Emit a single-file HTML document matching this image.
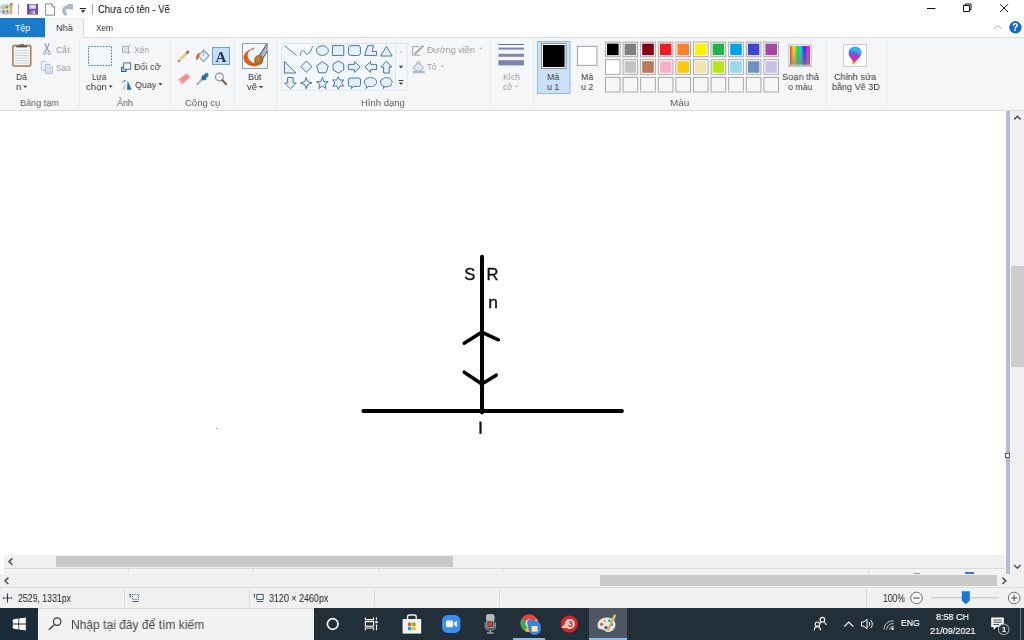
<!DOCTYPE html>
<html><head><meta charset="utf-8">
<style>
*{margin:0;padding:0;box-sizing:border-box}
html,body{width:1024px;height:640px;overflow:hidden;background:#fff}
body{font-family:"Liberation Sans",sans-serif;font-size:9.5px;color:#383838;position:relative}
.a{position:absolute}
.t{position:absolute;white-space:nowrap;will-change:transform;line-height:12px;height:12px;transform-origin:0 0;transform:scaleX(.93)}
.g{color:#9a9a9a}
.lbl{color:#5e5e5e}
.sep{position:absolute;width:1px;background:#e9eaec;top:40px;height:67px}
svg{position:absolute;overflow:visible}
</style></head><body>

<!-- ===== title bar ===== -->
<div class="a" id="titlebar" style="left:0;top:0;width:1024px;height:18px;background:#fff"></div>
<div class="t" style="left:98.3px;top:3px;font-size:10.5px;color:#000;transform:scaleX(0.896)">Chưa có tên - Vẽ</div>



<!-- ===== tab row ===== -->
<div class="a" style="left:0;top:18px;width:1024px;height:19px;background:#fff"></div>
<div class="a" style="left:0;top:18px;width:45px;height:19px;background:#1979ca"></div>
<div class="a" style="left:45px;top:18px;width:39px;height:20px;background:#f5f6f7;border:1px solid #dadbdc;border-top-color:#ebecee;border-left-color:#ebecee;border-bottom:none"></div>
<div class="t" style="left:14.6px;top:21.6px;color:#fff;transform:scaleX(0.934)">Tệp</div>
<div class="t" style="left:56.1px;top:21.6px;color:#333;transform:scaleX(0.958)">Nhà</div>
<div class="t" style="left:95.8px;top:21.6px;color:#333;transform:scaleX(0.87)">Xem</div>

<!-- title bar icons -->
<svg class="a" style="left:0;top:0" width="1024" height="40" viewBox="0 0 1024 40">
  <!-- paint app icon -->
  <ellipse cx="5.5" cy="9.5" rx="6" ry="4.6" fill="#dfe9d8" stroke="#8fb0c4" stroke-width="1"/>
  <circle cx="3.3" cy="8" r="1.4" fill="#d9b23a"/><circle cx="6.8" cy="7.2" r="1.4" fill="#5aa55a"/>
  <circle cx="3.6" cy="11.6" r="1.4" fill="#5a86c8"/><circle cx="7.3" cy="11.4" r="1.3" fill="#c06a8a"/>
  <rect x="10" y="3" width="2.2" height="11.5" rx="1" fill="#e8a35c"/>
  <rect x="9.6" y="3" width="3" height="2.6" fill="#c9863f"/>
  <rect x="18" y="4" width="1" height="10.5" fill="#a6a6a6"/>
  <!-- save -->
  <rect x="27" y="4" width="11" height="10.6" fill="#6b519f"/>
  <rect x="29.4" y="4.6" width="6.4" height="4.2" fill="#ded6ee"/>
  <rect x="30.6" y="10.6" width="4.6" height="3.4" fill="#cfc4e6"/>
  <rect x="31.2" y="11.2" width="1.4" height="2.4" fill="#6b519f"/>
  <!-- new doc -->
  <path d="M45.4 3.8 H51.6 L54.6 6.8 V15.2 H45.4 Z" fill="#fbfbfb" stroke="#8e8e8e" stroke-width="1"/>
  <path d="M51.6 3.8 V6.8 H54.6" fill="none" stroke="#8e8e8e" stroke-width=".8"/>
  <!-- redo -->
  <path d="M65.4 14 C62.6 11.4 63.2 7 68.6 6.8" fill="none" stroke="#a9b6cd" stroke-width="3.2" stroke-linecap="round"/><path d="M67.6 4 H73 V9.6 H70.4 L67.6 8.6 Z" fill="#a9b6cd"/>
  <!-- qat dropdown -->
  <rect x="79.8" y="8" width="6.2" height="1.1" fill="#222"/>
  <path d="M80.8 10.2 H85.2 L83 12.9 Z" fill="#222"/>
  <rect x="92" y="4" width="1" height="10.5" fill="#a6a6a6"/>
  <!-- window controls -->
  <rect x="927" y="8" width="8.4" height="1" fill="#111"/>
  <path d="M963.5 5.5 H969.5 V11.5 H963.5 Z M965.2 5.5 V4 H971 V9.8 H969.5" fill="none" stroke="#111" stroke-width="1"/>
  <path d="M1000.2 4.2 L1008 12 M1008 4.2 L1000.2 12" fill="none" stroke="#111" stroke-width="1"/>
  <!-- collapse ribbon -->
  <path d="M994.2 28.8 L997.8 25.4 L1001.4 28.8" fill="none" stroke="#bdbdbd" stroke-width="1.1"/>
  <!-- help -->
  <circle cx="1015.4" cy="27.3" r="6.2" fill="#176bc0"/>
  <text x="1015.4" y="31" font-family="Liberation Sans" font-weight="bold" font-size="10" fill="#fff" text-anchor="middle">?</text>
</svg>

<!-- ===== ribbon ===== -->
<div class="a" id="ribbon" style="left:0;top:37px;width:1024px;height:74px;background:#f5f6f7;border-top:1px solid #dadbdc;border-bottom:1px solid #dadbdc"></div>
<div class="a" style="left:46px;top:37px;width:37px;height:1px;background:#f5f6f7"></div>


<!-- ribbon separators -->
<div class="sep" style="left:79px"></div>
<div class="sep" style="left:170px"></div>
<div class="sep" style="left:234px"></div>
<div class="sep" style="left:276px"></div>
<div class="sep" style="left:490px"></div>
<div class="sep" style="left:533px"></div>
<div class="sep" style="left:826px"></div>
<div class="sep" style="left:886px"></div>

<!-- ribbon icons 1: clipboard / image / tools / brush -->
<svg class="a" id="ic1" style="left:0;top:0" width="1024" height="112" viewBox="0 0 1024 112">
  <!-- paste clipboard -->
  <rect x="12.9" y="45.6" width="17.8" height="20.4" rx="1.2" fill="#fdfdfd" stroke="#a77d47" stroke-width="1.6"/>
  <rect x="14.6" y="47.6" width="14.4" height="16.8" fill="#f4f6fa"/>
  <g stroke="#cfd4de" stroke-width="1"><path d="M15 50.5H28.6M15 53H28.6M15 55.5H28.6M15 58H28.6M15 60.5H28.6M15 63H28.6"/></g>
  <rect x="16.4" y="45.8" width="10.8" height="1.6" fill="#5d5348"/>
  <rect x="19.6" y="44" width="4.4" height="1.8" rx=".8" fill="#7a6e60"/>
  <!-- scissors (disabled) -->
  <g fill="none" stroke="#9da2c2" stroke-width="1.3">
    <path d="M44.6 43.4 L49 52"/><path d="M49.4 43.4 L45 52"/>
  </g>
  <circle cx="44.6" cy="53" r="1.5" fill="none" stroke="#a9aab8" stroke-width="1"/>
  <circle cx="49.4" cy="53" r="1.5" fill="none" stroke="#a9aab8" stroke-width="1"/>
  <!-- copy (disabled) -->
  <path d="M41.4 61.4 H46 L48.2 63.6 V70.2 H41.4 Z" fill="#eef2f8" stroke="#b9c3d6" stroke-width=".9"/>
  <path d="M45.4 64.6 H50 L52.4 67 V73.4 H45.4 Z" fill="#e4ecf7" stroke="#a9b6cf" stroke-width=".9"/>
  <g stroke="#b9c6dc" stroke-width=".7"><path d="M46.6 68H51M46.6 69.8H51M46.6 71.6H51"/></g>

  <!-- select dotted rect -->
  <rect x="88.5" y="46.5" width="23" height="19" fill="none" stroke="#3b6a9e" stroke-width=".9" stroke-dasharray="1.6 1.3"/>
  <path d="M108.8 85.6 H112.6 L110.7 87.8 Z" fill="#333"/>
  <!-- crop (disabled) -->
  <g fill="none" stroke="#a6aab9" stroke-width="1">
    <rect x="122.6" y="46.4" width="5.8" height="5.8" fill="#eef1f6"/>
    <path d="M128.4 46.4 L130.6 44.8 M128.4 52.2 H130.4 M128.4 52.2 V54"/>
    <path d="M124.2 50.6 L126.8 48" stroke="#b4b9cc"/>
  </g>
  <!-- resize -->
  <rect x="121.6" y="67.4" width="4.4" height="4" fill="#f5f6f7" stroke="#1f5fa8" stroke-width="1.2"/>
  <rect x="123.6" y="62.9" width="7" height="6.4" fill="#eef3fa" stroke="#55708c" stroke-width="1"/>
  <!-- rotate -->
  <path d="M127.6 80.6 L131.6 89.8 H127 Z" fill="#2e6da4"/>
  <path d="M125.6 82.4 L121.4 89.8 H125.6 Z" fill="#cfd5de"/>
  <path d="M122.2 83.2 C122.6 81.6 123.6 81 124.6 80.8" fill="none" stroke="#5f88b5" stroke-width="1"/>
  <rect x="124" y="80" width="1.4" height="1.6" fill="#3c76b0"/>
  <path d="M158.4 83.3 H162.4 L160.4 85.5 Z" fill="#333"/>
  <!-- pencil -->
  <path d="M178.2 61.6 L187.4 52.4" stroke="#dccd7c" stroke-width="2.7" fill="none"/>
  <path d="M186.6 53.2 L188.8 51" stroke="#8f7d4a" stroke-width="2.7" fill="none"/>
  <path d="M177.4 62.6 L178.6 59.8 L180.2 61.4 Z" fill="#9a8a60"/>
  <!-- fill bucket -->
  <path d="M203.6 50 L209 55.6 L203.4 61.6 L198.4 56 Z" fill="#eaf3fb" stroke="#7f9cb8" stroke-width="1.1"/>
  <path d="M203.6 50 L203.4 56" stroke="#8fa8c2" stroke-width=".9" fill="none"/>
  <path d="M199.6 52.6 C196.6 54 195.4 57.6 196.6 60.6 C198.2 59 199.2 56.4 199.6 52.6 Z" fill="#e2512a"/>
  <!-- text tool (selected) -->
  <rect x="212.5" y="47.5" width="17" height="17" fill="#c7def6" stroke="#6c9fd6" stroke-width="1"/>
  <text x="221" y="62" font-family="Liberation Serif" font-weight="bold" font-size="15" fill="#1f3560" text-anchor="middle">A</text>
  <!-- eraser -->
  <path d="M178.2 79.6 L186.6 73.4 L190.2 77 L182 84.2 Z" fill="#f08f94"/>
  <path d="M178.2 79.6 L182 84.2 L183.6 82.8 L179.8 78.4 Z" fill="#f4aaae"/>
  <!-- color picker -->
  <path d="M197.4 84.2 L203.6 77.8" stroke="#aeb4bd" stroke-width="2.2" fill="none" stroke-linecap="round"/>
  <path d="M203.2 78.4 L206.6 74.8" stroke="#2f74b5" stroke-width="4" fill="none" stroke-linecap="round"/>
  <path d="M202 75.8 L206 79.8" stroke="#2a5f96" stroke-width="1.4" fill="none"/>
  <!-- magnifier -->
  <circle cx="219.4" cy="77" r="3.9" fill="#f3f7fb" stroke="#8b9097" stroke-width="1.2"/>
  <path d="M222.4 80.2 L226 84.2" stroke="#6b5a4a" stroke-width="2" fill="none" stroke-linecap="round"/>
  <!-- brushes -->
  <rect x="242.5" y="43.5" width="25" height="25" fill="#f3f6fa" stroke="#9b9fa3" stroke-width="1"/>
  <path d="M253.4 48.4 C246.4 50 243 54.6 243.6 58.6 C244.4 63.6 249.6 66.8 255 66.2 C257.4 66 259 65 259.6 64 L252.6 62.6 C249.4 60.8 247.2 58 247.6 54.8 C247.8 52.6 249.6 50.4 252.6 49.6 Z" fill="#e65a1c"/>
  <path d="M251.4 48 L254.4 47.6 L253.6 50.2 Z" fill="#e8743a"/>
  <path d="M259.6 55.4 L266.8 44.4" stroke="#59616b" stroke-width="1.4" fill="none"/>
  <path d="M261.4 56.6 L267.2 47.2" stroke="#aab3be" stroke-width="2.4" fill="none"/>
  <path d="M263 58 L267.4 51" stroke="#59616b" stroke-width="1.2" fill="none"/>
  <ellipse cx="258.8" cy="60" rx="4.6" ry="5.2" transform="rotate(25 258.8 60)" fill="#a56e35"/>
  <ellipse cx="257.8" cy="59" rx="2.4" ry="3" transform="rotate(25 257.8 59)" fill="#b57f45"/>
  <path d="M259 86 H263 L261 88.2 Z" fill="#333"/>
  <!-- paste dropdown arrow -->
  <path d="M23.3 85.7 H27.1 L25.2 87.9 Z" fill="#333"/>
</svg>


<!-- shapes gallery -->
<svg class="a" id="ic2" style="left:0;top:0" width="1024" height="112" viewBox="0 0 1024 112">
  <defs><linearGradient id="sg" x1="0" y1="0" x2="1" y2="1"><stop offset="0" stop-color="#dcebfa"/><stop offset="1" stop-color="#f1f7fd"/></linearGradient></defs>
  <rect x="281.5" y="43.5" width="125.5" height="46.5" fill="#f4f8fc" stroke="#e0e5ec" stroke-width="1"/>
  <rect x="395" y="44" width="1" height="45.5" fill="#e3e7ee"/>
  <g fill="url(#sg)" stroke="#4877a4" stroke-width="1" stroke-linejoin="round">
    <path d="M284.2 45.6 L296.6 55.4" fill="none" stroke="#5b7fa3"/>
    <path d="M300.2 55.6 C300.4 51.8 302.4 49.8 304 51 C306 52.6 305.6 55 307.6 54.2 C310 53.2 311.6 49.4 312.6 46.2" fill="none" stroke="#5b7fa3"/>
    <ellipse cx="322.4" cy="50.6" rx="6" ry="4.8"/>
    <rect x="332.4" y="45.6" width="11.4" height="9.8"/>
    <rect x="348.4" y="45.6" width="12" height="9.8" rx="2.2"/>
    <path d="M367.6 45.6 H373.6 L372.2 51.4 H376.6 V55.4 H364.6 Z"/>
    <path d="M386.4 46.4 L392.2 56 H380.6 Z"/>
    <path d="M284.4 61.4 V73 H295.8 Z"/>
    <path d="M306.4 61 L312 66.6 L306.4 72.2 L300.8 66.6 Z"/>
    <polygon points="322.4,61.6 328.3,65.9 326.0,72.8 318.8,72.8 316.5,65.9"/>
    <polygon points="338.4,60.9 343.7,64.0 343.7,70.0 338.4,73.1 333.1,70.0 333.1,64.0"/>
    <path d="M348.4 64.4 H354.4 V61.6 L360.2 67 L354.4 72.4 V69.6 H348.4 Z"/>
    <path d="M376.6 64.4 H370.6 V61.6 L364.8 67 L370.6 72.4 V69.6 H376.6 Z"/>
    <path d="M383.6 73 V67 H380.8 L386.4 61.2 L392 67 H389.2 V73 Z"/>
    <path d="M287.6 77.6 V83 H284.6 L290.4 88.8 L296.2 83 H293.2 V77.6 Z"/>
    <polygon points="306.2,77.2 307.7,81.5 312.0,83.0 307.7,84.5 306.2,88.8 304.7,84.5 300.4,83.0 304.7,81.5"/>
    <polygon points="322.4,77.4 323.9,81.5 328.3,81.7 324.9,84.4 326.0,88.6 322.4,86.2 318.8,88.6 319.9,84.4 316.5,81.7 320.9,81.5"/>
    <polygon points="338.2,76.8 339.9,80.1 343.6,79.9 341.6,83.0 343.6,86.1 339.9,85.9 338.2,89.2 336.5,85.9 332.8,86.1 334.8,83.0 332.8,79.9 336.5,80.1"/>
    <path d="M350.4 78 H358.6 Q360.6 78 360.6 80 V84.4 Q360.6 86.4 358.6 86.4 H353.6 L351.2 88.8 L351.6 86.4 H350.4 Q348.4 86.4 348.4 84.4 V80 Q348.4 78 350.4 78 Z"/>
    <path d="M370.4 77.6 C374 77.6 376.6 79.6 376.6 82 C376.6 84.6 373.8 86.6 370.2 86.6 C369.4 86.6 368.8 86.5 368.2 86.4 L366.2 88.6 L366.6 85.8 C365.2 85 364.4 83.6 364.4 82 C364.4 79.6 367 77.6 370.4 77.6 Z"/>
    <path d="M383.4 78.6 C384.4 77.2 386.4 77.4 387 78.2 C388.6 77.2 390.6 78 390.6 79.6 C392.4 80.2 392.6 82.4 391.4 83.4 C392 85 390.4 86.4 388.8 86 C388 87.2 386 87.2 385.2 86.2 L383.4 88.6 L383.6 86 C381.8 86 380.6 84.6 381.2 83.2 C379.8 82 380.4 79.8 382 79.6 C382 79 382.6 78.6 383.4 78.6 Z"/>
  </g>
  <path d="M399.2 52.6 L401 50.6 L402.8 52.6 Z" fill="#c3c6cc"/>
  <path d="M398.8 65.8 H403.2 L401 68.4 Z" fill="#444"/>
  <rect x="398.6" y="80" width="4.8" height="1" fill="#444"/>
  <path d="M398.8 82.4 H403.2 L401 85 Z" fill="#444"/>
</svg>


<!-- outline/fill, size, colours -->
<svg class="a" id="ic3" style="left:0;top:0" width="1024" height="112" viewBox="0 0 1024 112">
  <defs>
    <linearGradient id="rb" x1="0" y1="0" x2="1" y2="0">
      <stop offset="0" stop-color="#ff2a2a"/><stop offset=".18" stop-color="#ffe42a"/><stop offset=".38" stop-color="#2ad43a"/>
      <stop offset=".55" stop-color="#22c8d8"/><stop offset=".72" stop-color="#2a2aff"/><stop offset=".88" stop-color="#e02ae0"/><stop offset="1" stop-color="#ff2a4a"/>
    </linearGradient>
    <linearGradient id="rbv" x1="0" y1="0" x2="0" y2="1"><stop offset="0" stop-color="#808080" stop-opacity="0"/><stop offset=".25" stop-color="#808080" stop-opacity=".08"/><stop offset="1" stop-color="#808080" stop-opacity=".62"/></linearGradient>
    <linearGradient id="p3" x1="0" y1="0" x2="0" y2="1"><stop offset="0" stop-color="#2bb6e8"/><stop offset=".4" stop-color="#6a5be0"/><stop offset=".7" stop-color="#d9309a"/><stop offset="1" stop-color="#f06a28"/></linearGradient>
  </defs>
  <!-- outline icon -->
  <path d="M419.4 46.6 H412.6 V55.2 H420.4" fill="none" stroke="#a2a4aa" stroke-width="1"/>
  <path d="M414.8 54 L423.4 45.8" stroke="#a7a9b0" stroke-width="2.2" fill="none"/>
  <path d="M479 47.8 H482.6 L480.8 49.8 Z" fill="#b4b4b4"/>
  <!-- fill icon -->
  <path d="M418.4 62.4 L423.8 67.6 L418.4 72.4 L413 67.6 Z" fill="#dfe6ef" stroke="#9faabd" stroke-width="1"/><path d="M416.6 64.6 C416.4 62 417.4 61.2 418.4 61.2 C419.4 61.2 420.4 62 420.2 64.6" fill="none" stroke="#a7b1c2" stroke-width=".9"/>
  <rect x="412.6" y="70.8" width="12" height="2.4" fill="#a9b6ca"/>
  <path d="M440.6 65.6 H444.2 L442.4 67.6 Z" fill="#b4b4b4"/>
  <!-- size -->
  <rect x="498.4" y="44" width="25.6" height="1" fill="#70727c"/>
  <rect x="498.4" y="47.6" width="25.6" height="2" fill="#7d84b0"/>
  <rect x="498.4" y="53.8" width="25.6" height="3" fill="#7d84b0"/>
  <rect x="498.4" y="60.2" width="25.6" height="5.2" fill="#7d84b0"/>
  <path d="M514.8 85.8 H518 L516.4 87.6 Z" fill="#b4b4b4"/>
  <!-- colour 1 -->
  <rect x="537.5" y="41.5" width="32.5" height="52" fill="#c9e0f7" stroke="#90bdec" stroke-width="1"/>
  <rect x="541.5" y="43.5" width="24.6" height="25" fill="#fff" stroke="#8a8f96" stroke-width="1"/>
  <rect x="543" y="45" width="21.6" height="22" fill="#000"/>
  <!-- colour 2 -->
  <rect x="577.5" y="46.4" width="19.4" height="19" fill="#fff" stroke="#a8a8a8" stroke-width="1.1"/>
  <!-- palette -->
  <rect x="605.5" y="42.1" width="14.6" height="14.6" fill="#fff" stroke="#a9a9a9" stroke-width="1"/><rect x="607.0" y="43.6" width="11.6" height="11.6" fill="#000000"/>
<rect x="623.1" y="42.1" width="14.6" height="14.6" fill="#fff" stroke="#a9a9a9" stroke-width="1"/><rect x="624.6" y="43.6" width="11.6" height="11.6" fill="#7f7f7f"/>
<rect x="640.7" y="42.1" width="14.6" height="14.6" fill="#fff" stroke="#a9a9a9" stroke-width="1"/><rect x="642.2" y="43.6" width="11.6" height="11.6" fill="#880015"/>
<rect x="658.3" y="42.1" width="14.6" height="14.6" fill="#fff" stroke="#a9a9a9" stroke-width="1"/><rect x="659.8" y="43.6" width="11.6" height="11.6" fill="#ed1c24"/>
<rect x="675.9" y="42.1" width="14.6" height="14.6" fill="#fff" stroke="#a9a9a9" stroke-width="1"/><rect x="677.4" y="43.6" width="11.6" height="11.6" fill="#ff7f27"/>
<rect x="693.5" y="42.1" width="14.6" height="14.6" fill="#fff" stroke="#a9a9a9" stroke-width="1"/><rect x="695.0" y="43.6" width="11.6" height="11.6" fill="#fff200"/>
<rect x="711.1" y="42.1" width="14.6" height="14.6" fill="#fff" stroke="#a9a9a9" stroke-width="1"/><rect x="712.6" y="43.6" width="11.6" height="11.6" fill="#22b14c"/>
<rect x="728.7" y="42.1" width="14.6" height="14.6" fill="#fff" stroke="#a9a9a9" stroke-width="1"/><rect x="730.2" y="43.6" width="11.6" height="11.6" fill="#00a2e8"/>
<rect x="746.3" y="42.1" width="14.6" height="14.6" fill="#fff" stroke="#a9a9a9" stroke-width="1"/><rect x="747.8" y="43.6" width="11.6" height="11.6" fill="#3f48cc"/>
<rect x="763.9" y="42.1" width="14.6" height="14.6" fill="#fff" stroke="#a9a9a9" stroke-width="1"/><rect x="765.4" y="43.6" width="11.6" height="11.6" fill="#a349a4"/>
<rect x="605.5" y="59.7" width="14.6" height="14.6" fill="#fff" stroke="#a9a9a9" stroke-width="1"/><rect x="607.0" y="61.2" width="11.6" height="11.6" fill="#ffffff"/>
<rect x="623.1" y="59.7" width="14.6" height="14.6" fill="#fff" stroke="#a9a9a9" stroke-width="1"/><rect x="624.6" y="61.2" width="11.6" height="11.6" fill="#c3c3c3"/>
<rect x="640.7" y="59.7" width="14.6" height="14.6" fill="#fff" stroke="#a9a9a9" stroke-width="1"/><rect x="642.2" y="61.2" width="11.6" height="11.6" fill="#b97a57"/>
<rect x="658.3" y="59.7" width="14.6" height="14.6" fill="#fff" stroke="#a9a9a9" stroke-width="1"/><rect x="659.8" y="61.2" width="11.6" height="11.6" fill="#ffaec9"/>
<rect x="675.9" y="59.7" width="14.6" height="14.6" fill="#fff" stroke="#a9a9a9" stroke-width="1"/><rect x="677.4" y="61.2" width="11.6" height="11.6" fill="#ffc90e"/>
<rect x="693.5" y="59.7" width="14.6" height="14.6" fill="#fff" stroke="#a9a9a9" stroke-width="1"/><rect x="695.0" y="61.2" width="11.6" height="11.6" fill="#efe4b0"/>
<rect x="711.1" y="59.7" width="14.6" height="14.6" fill="#fff" stroke="#a9a9a9" stroke-width="1"/><rect x="712.6" y="61.2" width="11.6" height="11.6" fill="#b5e61d"/>
<rect x="728.7" y="59.7" width="14.6" height="14.6" fill="#fff" stroke="#a9a9a9" stroke-width="1"/><rect x="730.2" y="61.2" width="11.6" height="11.6" fill="#99d9ea"/>
<rect x="746.3" y="59.7" width="14.6" height="14.6" fill="#fff" stroke="#a9a9a9" stroke-width="1"/><rect x="747.8" y="61.2" width="11.6" height="11.6" fill="#7092be"/>
<rect x="763.9" y="59.7" width="14.6" height="14.6" fill="#fff" stroke="#a9a9a9" stroke-width="1"/><rect x="765.4" y="61.2" width="11.6" height="11.6" fill="#c8bfe7"/>
<rect x="605.5" y="77.4" width="14.6" height="14.6" fill="#f5f6f7" stroke="#a9a9a9" stroke-width="1"/>
<rect x="623.1" y="77.4" width="14.6" height="14.6" fill="#f5f6f7" stroke="#a9a9a9" stroke-width="1"/>
<rect x="640.7" y="77.4" width="14.6" height="14.6" fill="#f5f6f7" stroke="#a9a9a9" stroke-width="1"/>
<rect x="658.3" y="77.4" width="14.6" height="14.6" fill="#f5f6f7" stroke="#a9a9a9" stroke-width="1"/>
<rect x="675.9" y="77.4" width="14.6" height="14.6" fill="#f5f6f7" stroke="#a9a9a9" stroke-width="1"/>
<rect x="693.5" y="77.4" width="14.6" height="14.6" fill="#f5f6f7" stroke="#a9a9a9" stroke-width="1"/>
<rect x="711.1" y="77.4" width="14.6" height="14.6" fill="#f5f6f7" stroke="#a9a9a9" stroke-width="1"/>
<rect x="728.7" y="77.4" width="14.6" height="14.6" fill="#f5f6f7" stroke="#a9a9a9" stroke-width="1"/>
<rect x="746.3" y="77.4" width="14.6" height="14.6" fill="#f5f6f7" stroke="#a9a9a9" stroke-width="1"/>
<rect x="763.9" y="77.4" width="14.6" height="14.6" fill="#f5f6f7" stroke="#a9a9a9" stroke-width="1"/>

  <!-- edit colours -->
  <rect x="788.5" y="44.5" width="23" height="22" fill="#ececee" stroke="#cdcdd0" stroke-width="1"/>
  <rect x="790" y="46" width="20" height="18.6" fill="url(#rb)"/>
  <rect x="790" y="46" width="20" height="18.6" fill="url(#rbv)"/>
  <rect x="789" y="65" width="22" height="1.4" fill="#bcbcbe"/>
  <!-- paint 3d -->
  <rect x="843.5" y="44.5" width="23" height="22" fill="#fdfdfd" stroke="#cbcbce" stroke-width="1"/>
  <rect x="844" y="66" width="22" height="1" fill="#c9c9cb"/>
  <path d="M855 46.8 C858.8 46.8 861.4 49.4 861.4 52.8 C861.4 56.2 858.8 58.4 856.6 60.4 C855.2 61.8 854.8 63.4 853.8 64.2 C852.8 64.8 852 64 852.6 62.6 C853.2 61.2 852.4 60.2 851 58.6 C849.6 57 848.6 55.2 848.6 53 C848.6 49.4 851.2 46.8 855 46.8 Z" fill="url(#p3)"/>
  <path d="M855 46.8 C858.8 46.8 861.4 49.4 861.4 52.8 C861.4 54 861 55.2 860.4 56.2 C858 52.6 855.8 51.6 852 51 C852.6 48.6 853.4 47 855 46.8 Z" fill="#28c2e6" opacity=".75"/>
  <path d="M852.4 63.4 L853 61.6 L854.6 62.6 L853.6 64.4 Z" fill="#f5b62a"/>
</svg>

<!-- ribbon text -->
<div class="t" style="left:15.6px;top:71px;transform:scaleX(0.913)">Dá</div>
<div class="t" style="left:15.6px;top:81px;transform:scaleX(1.001)">n</div>
<div class="t g" style="left:56.3px;top:43.5px;transform:scaleX(0.912)">Cắt</div>
<div class="t g" style="left:56.3px;top:61.5px;transform:scaleX(0.87)">Sao</div>
<div class="t lbl" style="left:19.8px;top:97.3px;transform:scaleX(0.956)">Bảng tạm</div>

<div class="t" style="left:92.1px;top:71px;transform:scaleX(0.844)">Lựa</div>
<div class="t" style="left:85.5px;top:81px;transform:scaleX(1.014)">chọn</div>
<div class="t g" style="left:134.2px;top:43.5px;transform:scaleX(0.905)">Xén</div>
<div class="t" style="left:134.2px;top:61px;transform:scaleX(0.947)">Đổi cỡ</div>
<div class="t" style="left:134.6px;top:78.5px;transform:scaleX(0.933)">Quay</div>
<div class="t lbl" style="left:116.5px;top:97.3px;transform:scaleX(0.952)">Ảnh</div>

<div class="t lbl" style="left:184.6px;top:97.3px;transform:scaleX(0.997)">Công cụ</div>

<div class="t" style="left:248.2px;top:71px;transform:scaleX(0.953)">Bút</div>
<div class="t" style="left:246.8px;top:81px;transform:scaleX(0.965)">vẽ</div>

<div class="t lbl" style="left:360.6px;top:97.3px;transform:scaleX(1.001)">Hình dạng</div>
<div class="t g" style="left:427.2px;top:43.5px;transform:scaleX(0.954)">Đường viền</div>
<div class="t g" style="left:427.1px;top:61px;transform:scaleX(0.847)">Tô</div>

<div class="t g" style="left:502.6px;top:71px;transform:scaleX(0.889)">Kích</div>
<div class="t g" style="left:502.6px;top:81px;transform:scaleX(0.847)">cỡ</div>

<div class="t" style="left:547px;top:71px">Mà</div>
<div class="t" style="left:547px;top:81px">u 1</div>
<div class="t" style="left:581px;top:71px">Mà</div>
<div class="t" style="left:581px;top:81px">u 2</div>
<div class="t lbl" style="left:669.5px;top:97.3px;transform:scaleX(1.044)">Màu</div>

<div class="t" style="left:781.5px;top:71px;transform:scaleX(0.975)">Soạn thả</div>
<div class="t" style="left:787.9px;top:81px;transform:scaleX(0.928)">o màu</div>
<div class="t" style="left:834.0px;top:71px;transform:scaleX(0.962)">Chỉnh sửa</div>
<div class="t" style="left:831.5px;top:81px;transform:scaleX(0.954)">bằng Vẽ 3D</div>



<!-- ===== canvas ===== -->
<div class="a" id="canvas" style="left:0;top:111px;width:1006px;height:464px;background:#fff"></div>
<!-- right stripe + vertical scrollbar -->
<div class="a" style="left:1006px;top:111px;width:4px;height:463px;background:#b1bad8"></div>
<div class="a" style="left:1010px;top:111px;width:1px;height:463px;background:#f7f8fb"></div>
<div class="a" style="left:1011px;top:111px;width:13px;height:464px;background:#f0f0f0"></div>
<div class="a" style="left:1011px;top:266px;width:13px;height:101px;background:#cdcdcd"></div>
<div class="a" style="left:1005px;top:453px;width:5px;height:5px;background:#fff;border:1px solid #555"></div>

<!-- drawing -->
<svg class="a" style="left:0;top:0" width="1024" height="640" viewBox="0 0 1024 640">
  <g fill="none" stroke="#000" stroke-width="4" stroke-linecap="round">
    <path d="M482 256.8 V412.6"/>
    <path d="M363.4 411 H621.9"/>
    <path d="M464.2 343.2 L481.6 332.2 L498.4 339.8" stroke-width="3.5" stroke-linejoin="round"/>
    <path d="M464.2 372.2 L481.8 384 L496.2 375.2" stroke-width="3.5" stroke-linejoin="round"/>
  </g>
  <g font-family="Liberation Sans" font-size="16.6" fill="#111" stroke="#111" stroke-width=".35">
    <text x="464.2" y="280">S</text>
    <text x="486.4" y="280">R</text>
    <text x="488.2" y="308" font-size="17.4">n</text>
  </g>
  <rect x="479.4" y="421.6" width="2.2" height="12.2" fill="#111"/>
  <rect x="216" y="428" width="1" height="1" fill="#999"/>
  <!-- vertical scrollbar arrows -->
  <path d="M1014.2 119.4 L1017.4 116.2 L1020.6 119.4" fill="none" stroke="#505050" stroke-width="1.5"/>
  <path d="M1014.2 565 L1017.4 568.2 L1020.6 565" fill="none" stroke="#505050" stroke-width="1.5"/>
</svg>

<!-- horizontal scrollbar 1 -->
<div class="a" style="left:4px;top:555px;width:1001px;height:13px;background:#f0f0f0"></div>
<div class="a" style="left:56px;top:556px;width:397px;height:11px;background:#c9c9c9"></div>
<div class="a" style="left:4px;top:568px;width:1001px;height:1px;background:#d9d9d9"></div>
<div class="a" style="left:4px;top:569px;width:1001px;height:6px;background:#f3f3f3"></div>
<div class="a" style="left:128px;top:569px;width:1px;height:3px;background:#dadada"></div>
<div class="a" style="left:253px;top:569px;width:1px;height:3px;background:#dadada"></div>
<div class="a" style="left:378px;top:569px;width:1px;height:3px;background:#dadada"></div>
<div class="a" style="left:502px;top:569px;width:1px;height:3px;background:#dadada"></div>
<div class="a" style="left:868px;top:569px;width:1px;height:5px;background:#dadada"></div>
<div class="a" style="left:965px;top:572px;width:9px;height:2px;background:#2a7bd4"></div>
<div class="a" style="left:914px;top:573px;width:6px;height:1px;background:#9a9a9a"></div>
<!-- horizontal scrollbar 2 -->
<div class="a" style="left:0;top:574px;width:1024px;height:14px;background:#f0f0f0"></div>
<div class="a" style="left:600px;top:575px;width:397px;height:11px;background:#c9c9c9"></div>
<div class="a" style="left:0;top:587px;width:1024px;height:1px;background:#dcdcdc"></div>
<svg class="a" style="left:0;top:0" width="1024" height="640" viewBox="0 0 1024 640">
  <path d="M12.4 558.4 L9 561.6 L12.4 564.8" fill="none" stroke="#505050" stroke-width="1.5"/>
  <path d="M8.4 577.6 L5 580.8 L8.4 584" fill="none" stroke="#505050" stroke-width="1.5"/>
  <path d="M1002.4 577.6 L1005.8 580.8 L1002.4 584" fill="none" stroke="#505050" stroke-width="1.5"/>
</svg>

<!-- ===== status bar ===== -->
<div class="a" id="status" style="left:0;top:588px;width:1024px;height:20px;background:#f0f0f0"></div>
<div class="a" style="left:124px;top:589px;width:1px;height:18px;background:#dcdcdc"></div>
<div class="a" style="left:249px;top:589px;width:1px;height:18px;background:#dcdcdc"></div>
<div class="a" style="left:374px;top:589px;width:1px;height:18px;background:#dcdcdc"></div>
<div class="a" style="left:499px;top:589px;width:1px;height:18px;background:#dcdcdc"></div>
<div class="a" style="left:866px;top:589px;width:1px;height:18px;background:#dcdcdc"></div>
<div class="t" style="left:17.5px;top:592.5px;font-size:10px;color:#222;transform:scaleX(.875)">2529, 1331px</div>
<div class="t" style="left:268.5px;top:592.5px;font-size:10px;color:#222;transform:scaleX(.892)">3120 × 2460px</div>
<div class="t" style="left:883px;top:592.5px;font-size:10px;color:#222;transform:scaleX(.86)">100%</div>
<svg class="a" style="left:0;top:0" width="1024" height="640" viewBox="0 0 1024 640">
  <!-- cursor pos icon -->
  <g stroke="#2c3a48" stroke-width="1.1" fill="none"><path d="M7.5 593.6 V602.4 M5.4 598 H9.6"/></g><rect x="3" y="597.3" width="1.5" height="1.5" fill="#2c3a48"/><rect x="10.6" y="597.3" width="1.5" height="1.5" fill="#2c3a48"/>
  <!-- selection size icon -->
  <g stroke="#4a5a6a" stroke-width="1" fill="none"><rect x="132.4" y="594.4" width="6.2" height="5" stroke-dasharray="1.2 1"/><path d="M130.2 594 V597.8 M129.4 594.3 H131"/><path d="M132.4 601.5 H138.6"/></g>
  <!-- image size icon -->
  <g stroke="#4a5a6a" stroke-width="1" fill="none"><rect x="256.8" y="594.4" width="6.4" height="5"/><path d="M254.4 594 V597.8 M253.6 594.3 H255.2"/><path d="M256.8 601.5 H263.2"/></g>
  <!-- zoom controls -->
  <circle cx="916.5" cy="598" r="5.8" fill="#f7f7f7" stroke="#6c6c6c" stroke-width="1"/>
  <rect x="913.4" y="597.5" width="6.2" height="1.1" fill="#555"/>
  <rect x="931" y="597" width="68" height="1.4" fill="#d0d0d0"/>
  <path d="M961.8 591.2 H969.8 V600.6 L965.8 604.2 L961.8 600.6 Z" fill="#1577d8"/>
  <circle cx="1014.2" cy="598" r="5.8" fill="#f7f7f7" stroke="#6c6c6c" stroke-width="1"/>
  <rect x="1011.1" y="597.5" width="6.2" height="1.1" fill="#555"/>
  <rect x="1013.65" y="594.9" width="1.1" height="6.2" fill="#555"/>
</svg>

<!-- ===== taskbar ===== -->
<div class="a" id="taskbar" style="left:0;top:608px;width:1024px;height:32px;background:#222e38"></div>
<div class="a" style="left:0;top:608px;width:38px;height:32px;background:#1c2b38"></div>
<div class="a" style="left:38px;top:608px;width:276px;height:32px;background:#f2f2f2;border-top:1px solid #d5d5d5"></div>
<div class="a" style="left:589px;top:608px;width:38px;height:32px;background:#4e5762"></div>
<div class="a" style="left:589px;top:638px;width:38px;height:2px;background:#86bdea"></div>
<div class="a" style="left:513px;top:638px;width:32px;height:2px;background:#86bdea"></div>
<div class="a" style="left:1020px;top:608px;width:1px;height:32px;background:#6b747c"></div>
<div class="t" style="left:70.6px;top:617.5px;font-size:12.2px;line-height:14px;height:14px;color:#454545;transform:scaleX(.988)">Nhập tại đây để tìm kiếm</div>
<div class="t" style="left:901.4px;top:617.4px;font-size:9.8px;color:#fff;-webkit-text-stroke:.2px #fff;transform:scaleX(.885)">ENG</div>
<div class="t" style="left:936.4px;top:610.5px;font-size:9.8px;color:#fff;-webkit-text-stroke:.2px #fff;transform:scaleX(.92)">8:58 CH</div>
<div class="t" style="left:930.2px;top:625.25px;font-size:9.8px;color:#fff;-webkit-text-stroke:.2px #fff;transform:scaleX(.93)">21/09/2021</div>
<svg class="a" style="left:0;top:0" width="1024" height="640" viewBox="0 0 1024 640">
  <!-- windows logo -->
  <g fill="#fff">
    <path d="M12.8 619.4 L18.4 618.6 V623.6 H12.8 Z"/><path d="M19.2 618.5 L25.8 617.6 V623.6 H19.2 Z"/>
    <path d="M12.8 624.4 H18.4 V629.4 L12.8 628.6 Z"/><path d="M19.2 624.4 H25.8 V630.4 L19.2 629.5 Z"/>
  </g>
  <!-- search icon -->
  <circle cx="57.2" cy="621.6" r="3.7" fill="none" stroke="#3c3c3c" stroke-width="1.2"/>
  <path d="M54.6 624.4 L48.8 629.8" stroke="#3c3c3c" stroke-width="1.3" fill="none"/>
  <!-- cortana -->
  <circle cx="332.7" cy="624" r="5.3" fill="none" stroke="#fff" stroke-width="1.7"/>
  <!-- task view -->
  <g fill="none" stroke="#fff" stroke-width="1.1">
    <rect x="365.4" y="621.6" width="8.2" height="4.6"/>
    <path d="M365.4 617.4 V619.6 H373.6 V617.4"/>
    <path d="M365.4 630.2 V628 H373.6 V630.2"/>
    <path d="M376.5 617.4 V619.8 M376.5 624.4 V630.2"/>
  </g>
  <rect x="375.4" y="621" width="2.2" height="2.2" fill="#fff"/>
  <!-- store -->
  <path d="M407.6 619.4 V616.6 Q407.6 615 409.2 615 H414.6 Q416.2 615 416.2 616.6 V619.4" fill="none" stroke="#f4f4f4" stroke-width="1.4"/>
  <path d="M402.6 619 H421.2 V633.6 H402.6 Z" fill="#f4f4f4"/>
  <rect x="408" y="622.6" width="3.4" height="3.4" fill="#f25022"/><rect x="412.2" y="622.6" width="3.4" height="3.4" fill="#7fba00"/>
  <rect x="408" y="626.8" width="3.4" height="3.4" fill="#00a4ef"/><rect x="412.2" y="626.8" width="3.4" height="3.4" fill="#ffb900"/>
  <!-- zoom -->
  <rect x="442" y="615" width="18.4" height="18" rx="5.6" fill="#3c8df5"/>
  <rect x="446" y="620.6" width="7" height="6.6" rx="1.4" fill="#fff"/>
  <path d="M453.8 623 L456.8 620.8 V627 L453.8 624.8 Z" fill="#fff"/>
  <!-- recorder -->
  <rect x="486.2" y="614.2" width="8.2" height="14.4" rx="2" fill="#a6a9ad"/>
  <rect x="486.2" y="614.2" width="8.2" height="6.2" rx="2" fill="#b9bcbf"/>
  <rect x="487.2" y="621.2" width="6.2" height="6" rx="1" fill="#554a46"/>
  <circle cx="490.3" cy="624.2" r="2.1" fill="#c8472e"/>
  <path d="M485.2 622.4 V627.4 C485.2 631.2 495.4 631.2 495.4 627.4 V622.4" fill="none" stroke="#9fa3a6" stroke-width="1"/>
  <path d="M490.3 630.4 V632.4 M487 633 H493.6" stroke="#9fa3a6" stroke-width="1.3" fill="none"/>
  <!-- chrome -->
  <circle cx="529.2" cy="623.2" r="8.8" fill="#e5463c"/>
  <path d="M529.2 623.2 L521.6 618.8 A8.8 8.8 0 0 0 524.8 630.8 Z" fill="#35a853"/>
  <path d="M529.2 623.2 L524.8 630.8 A8.8 8.8 0 0 0 536.8 618.8 L529.2 623.2Z" fill="#f8c11a"/>
  <path d="M521.6 618.8 A8.8 8.8 0 0 1 536.8 618.8 L529.2 618.8 Z" fill="#e5463c"/>
  <circle cx="529.2" cy="623.2" r="3.6" fill="#f4f4f4"/>
  <path d="M527 622.4 C527 620.4 529.4 619.2 532.4 619.6 L538 621.6 C540.4 622.8 541.2 625.6 541 628.6 C540.8 632.6 538.2 635.2 534.6 635 C531 634.8 528.8 632.2 528.6 628.8 C528.4 626.4 527 624.6 527 622.4 Z" fill="#3f7fe2"/>
  <rect x="531.6" y="626" width="6" height="5.6" fill="#fbeaa4"/>
  <!-- red swirl icon -->
  <circle cx="569.4" cy="624" r="8.6" fill="#d8262b"/>
  <circle cx="569.8" cy="624" r="5" fill="#f6e8e4"/>
  <path d="M561 627.2 C564 629.4 568.4 628 570 624.6 L566.2 622.2 C565 624.4 563 626.2 561 627.2 Z" fill="#f3c9a6"/>
  <text x="570.6" y="627.4" font-family="Liberation Sans" font-weight="bold" font-size="9" fill="#c8202a" text-anchor="middle">3</text>
  <!-- paint -->
  <path d="M597.6 625.4 C597.6 620.4 602 617.6 607 617.6 C612.2 617.6 615.4 620.6 615.4 624.4 C615.4 628.8 611.8 632 607.4 632 C605.4 632 605 630.2 603.8 629.8 C602.2 629.2 597.6 629.8 597.6 625.4 Z" fill="#e6e9ea"/>
  <circle cx="601.6" cy="624.2" r="1.5" fill="#d24b3c"/><circle cx="604.8" cy="621" r="1.5" fill="#e9b93a"/>
  <circle cx="609.4" cy="620.8" r="1.5" fill="#5bb05b"/><circle cx="611.6" cy="624.6" r="1.5" fill="#3a8fd0"/>
  <circle cx="606" cy="627.6" r="1.6" fill="#46525d"/>
  <path d="M607.6 631 L613.6 618.2" stroke="#e0a050" stroke-width="1.8" fill="none"/>
  <path d="M613 619.4 L615.2 614.8" stroke="#d8c07a" stroke-width="2.4" fill="none"/>
  <!-- people -->
  <g fill="none" stroke="#f2f2f2" stroke-width="1.15">
    <circle cx="822.4" cy="619.7" r="2.3"/><path d="M819.6 624 L821.2 622 M823.6 622 C825 622.6 826 623.8 826.2 625.2"/>
    <circle cx="817.4" cy="624.2" r="2.2"/><path d="M814.2 630.4 C814.4 627.6 815.8 626.6 817.4 626.6 C819 626.6 820.4 627.6 820.6 630.4"/>
  </g>
  <!-- chevron -->
  <path d="M844.2 626.6 L848.8 622 L853.4 626.6" fill="none" stroke="#fff" stroke-width="1.2"/>
  <!-- speaker -->
  <path d="M861.6 622 H864 L867 619.2 V629 L864 626.2 H861.6 Z" fill="none" stroke="#fff" stroke-width="1"/>
  <path d="M868.8 621.8 C870 623 870 625.2 868.8 626.4 M870.6 620 C872.8 622.2 872.8 626 870.6 628.2" fill="none" stroke="#fff" stroke-width="1"/>
  <!-- wifi -->
  <g fill="none" stroke="#c9cdd1" stroke-width="1">
    <path d="M884 629.6 C884 624.4 888 620.8 893.6 620.8"/>
    <path d="M886.8 629.6 C886.8 626 889.6 623.6 893.6 623.6"/>
    <path d="M889.6 629.6 C889.6 627.6 891.2 626.4 893.6 626.4"/>
  </g>
  <circle cx="892.6" cy="628.8" r="1.2" fill="#fff"/>
  <!-- notifications -->
  <path d="M991.2 617.6 H1003.8 V627 H996.4 L993.6 629.8 V627 H991.2 Z" fill="#fff"/>
  <path d="M993.2 620 H1001.8 M993.2 622.2 H1001.8 M993.2 624.4 H999" stroke="#222d37" stroke-width=".9"/>
  <circle cx="1003.7" cy="629.4" r="5.3" fill="#2a343d" stroke="#9aa1a8" stroke-width="1.1"/>
  <text x="1003.9" y="632.4" font-family="Liberation Sans" font-weight="bold" font-size="8" fill="#fff" text-anchor="middle">1</text>
</svg>

</body></html>
